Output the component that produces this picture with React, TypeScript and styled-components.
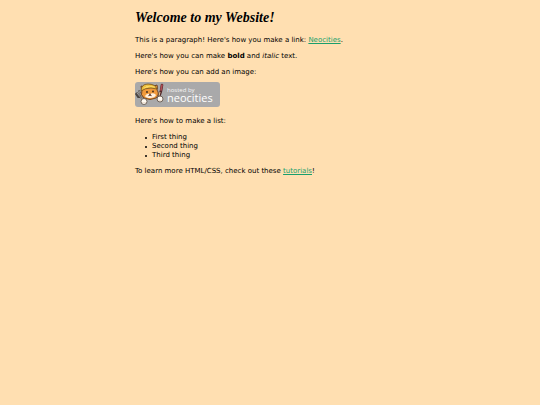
import React from "react";
import styled, { createGlobalStyle } from "styled-components";

const GlobalStyle = createGlobalStyle`
  body {
    margin: 0;
    background: #ffdfb1;
    color: #000;
    font-family: "DejaVu Sans", Verdana, sans-serif;
    font-size: 7px;
    line-height: 9px;
  }
`;

const Page = styled.main`
  width: 50%;
  margin: 0 auto;
  padding: 9px 0;
  display: flex;
  flex-direction: column;
  align-items: flex-start;
`;

const Title = styled.h1`
  margin: 0 0 10px;
  font: italic bold 14px/17px "Liberation Serif", "Times New Roman", serif;
`;

const Paragraph = styled.p`
  margin: 0 0 7px;
`;

const Link = styled.a`
  color: #1a9f6c;
  text-decoration: underline;
`;

const Badge = styled.svg`
  display: block;
  width: 85px;
  height: 25px;
  margin-bottom: 10px;
`;

const Caption = styled(Paragraph)`
  margin-bottom: 5px;
`;

const List = styled.ul`
  margin: 0 0 7px;
  padding-left: 10px;
  list-style: none;
`;

const Item = styled.li`
  display: flex;
  align-items: center;
  gap: 5px;

  &::before {
    content: "";
    width: 2px;
    height: 2px;
    border-radius: 1px;
    background: currentColor;
  }
`;

const items = ["First thing", "Second thing", "Third thing"];

function HostedBadge() {
  return (
    <Badge viewBox="0 0 85 25" role="img" aria-label="hosted by neocities">
      <rect width="85" height="25" rx="3" fill="#a9a9aa" />
      <g stroke="#4b4542" strokeLinecap="round" fill="none">
        <path d="M2 11l7 8M4 9l5 9M1 12l2 3 3-1" strokeWidth="1.7" />
        <path d="M2 11l6 7M4 9l4 8" stroke="#ddd" strokeWidth=".6" />
      </g>
      <path d="M27 3l-1 6-2 6" stroke="#54282b" strokeWidth="2.6" strokeLinecap="round" fill="none" />
      <path d="M27 3l-1 5" stroke="#b24e55" strokeWidth="1.6" strokeLinecap="round" />
      <path d="M25 10l-1 4" stroke="#e5ce9e" strokeWidth="1" />
      <path d="M6 4l3 1q5-4 10-1l3-1q1 3 0 5 3 4-1 8-6 3-12 0-4-3-2-8-1-2-1-4z" fill="#f09a3b" stroke="#653d20" strokeWidth=".9" />
      <path d="M6 9Q6 2 13 2q7 0 9 5l-6-1q-6 0-10 3z" fill="#edc03e" stroke="#71501d" strokeWidth=".8" />
      <path d="M9 6q5-3 11-1M11 4l2 1" fill="none" stroke="#ffe27a" strokeWidth=".7" />
      <path d="M10 14q2-3 5-2 4-2 6 1-1 3-6 3-4 0-5-2z" fill="#fff1df" />
      <circle cx="12" cy="10" r=".9" fill="#352820" />
      <circle cx="18" cy="9.5" r=".9" fill="#352820" />
      <path d="M14 12h2l-1 1zM13 14l2-1 2 1" fill="#553329" stroke="#553329" strokeWidth=".4" />
      <circle cx="9" cy="19.5" r="3" fill="#fffaf2" stroke="#65584e" strokeWidth=".9" />
      <circle cx="25" cy="17" r="3" fill="#fffaf2" stroke="#65584e" strokeWidth=".9" />
      <path d="M8 20v1M10 20v1M24 18v1M26 18v1" stroke="#bd9979" strokeWidth=".5" />
      <g fill="#fff" fontFamily="'Open Sans', 'Noto Sans', sans-serif">
        <text x="32" y="10" fontSize="6" opacity=".9">hosted by</text>
        <text x="32" y="20" fontSize="11" fontWeight="500">neocities</text>
      </g>
    </Badge>
  );
}

export default function App() {
  return (
    <>
      <GlobalStyle />
      <Page>
        <Title>Welcome to my Website!</Title>
        <Paragraph>
          This is a paragraph! Here's how you make a link:{" "}
          <Link href="https://neocities.org">Neocities</Link>.
        </Paragraph>
        <Paragraph>
          Here's how you can make <strong>bold</strong> and <em>italic</em> text.
        </Paragraph>
        <Caption>Here's how you can add an image:</Caption>
        <HostedBadge />
        <Paragraph>Here's how to make a list:</Paragraph>
        <List>
          {items.map((item) => (
            <Item key={item}>{item}</Item>
          ))}
        </List>
        <Paragraph>
          To learn more HTML/CSS, check out these{" "}
          <Link href="https://neocities.org/tutorials">tutorials</Link>!
        </Paragraph>
      </Page>
    </>
  );
}
